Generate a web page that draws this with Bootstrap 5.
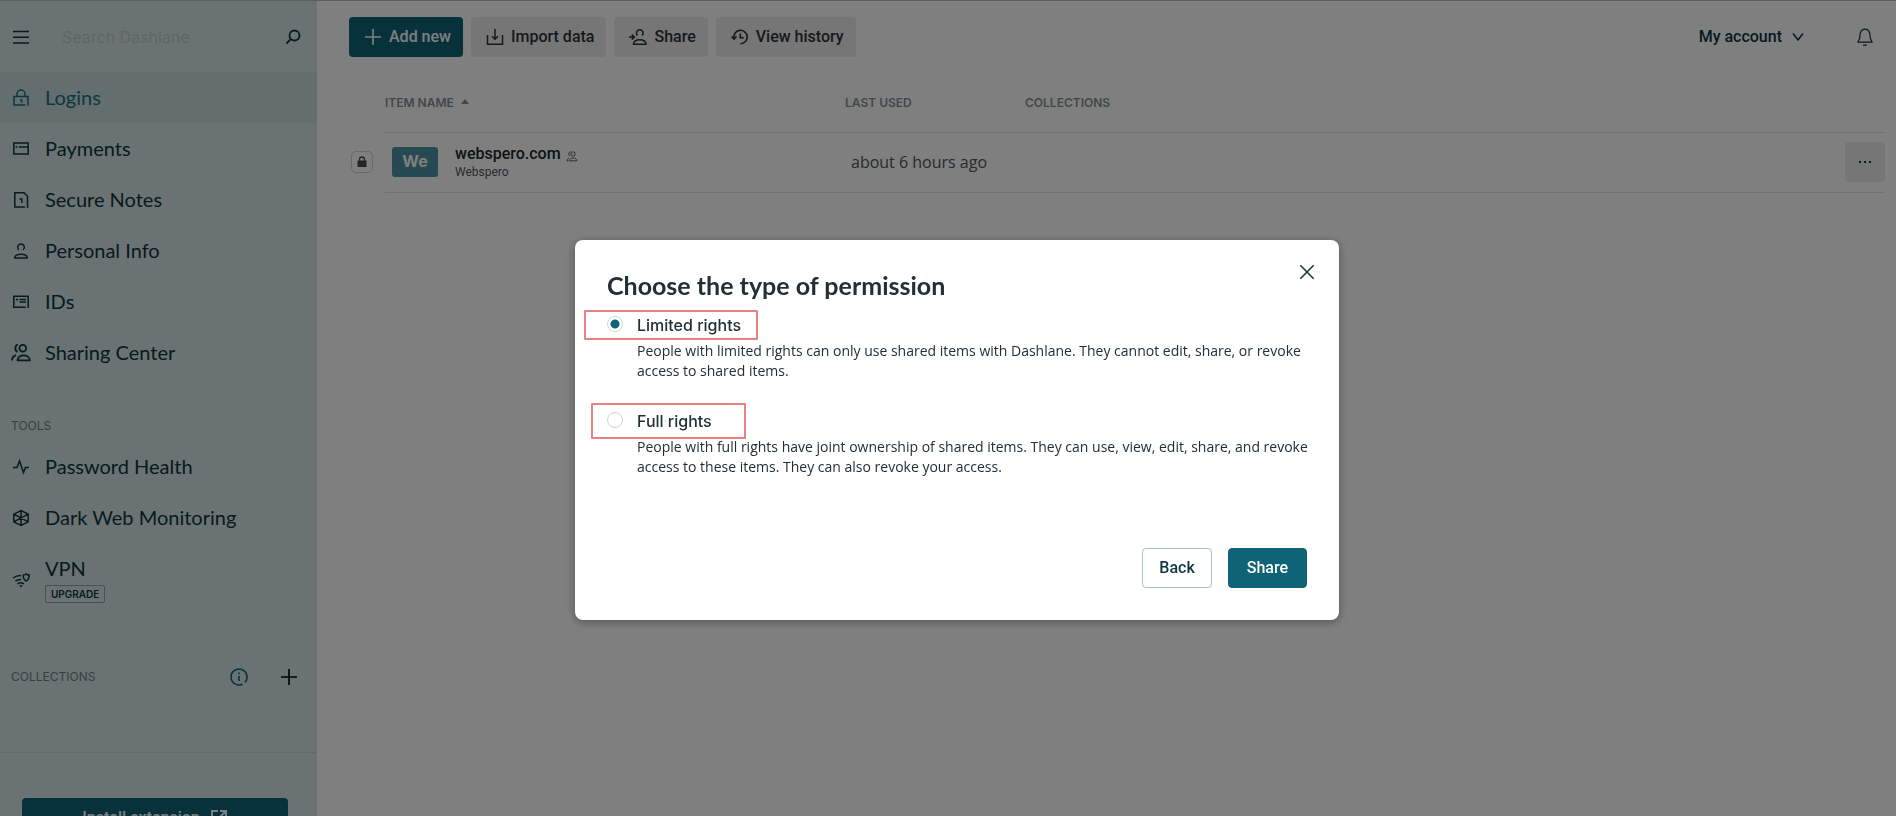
<!DOCTYPE html>
<html lang="en">
<head>
<meta charset="utf-8">
<meta name="viewport" content="width=device-width, initial-scale=1">
<title>Dashlane - Logins</title>
<link href="https://cdn.jsdelivr.net/npm/bootstrap@5.3.0/dist/css/bootstrap.min.css" rel="stylesheet">
<style>
  :root { --ink: #0e353d; --teal: #0e6476; --ui: Roboto, "Liberation Sans", sans-serif; --caps: Inter, "Liberation Sans", sans-serif; --read: "Open Sans", "Liberation Sans", sans-serif; --display: Lato, "Liberation Sans", sans-serif; }
  body { font-family: var(--ui); font-size: 16px; line-height: 24px; color: var(--ink); overflow: hidden; }
  svg { display: block; flex: none; fill: none; stroke: currentColor; }
  .shell { height: 100vh; border-top: 1px solid #bcbcbc; }

  .side { width: 317px; flex: none; background: #d6e5e8; overflow: hidden; }
  .search-row { height: 71px; padding: 0 12px 0 9px; gap: 29px; }
  .search-row input { font-family: var(--caps); font-size: 16px; background: none; border: 0; padding: 0; min-width: 0; outline: 0; }
  .search-row input::placeholder { color: #bfcacd; opacity: 1; }
  .icon-btn { border: 0; background: none; padding: 0; color: inherit; }
  .side-link { padding: 13px 9px; gap: 12px; font: 400 20px/25px var(--display); color: var(--ink); text-decoration: none; }
  .side-link.active { background: #c9dcdf; color: #17707f; }
  .side-head { font: 400 12px/24px var(--caps); color: #6d8085; padding: 0 11px; margin: 0; }
  .tools-head { padding-top: 36px; padding-bottom: 3px; }
  .coll-head { padding-top: 49px; padding-bottom: 63px; padding-right: 16px; gap: 26px; }
  .coll-info { color: var(--teal); }
  .upgrade { font: 600 10px/16px var(--caps); border: 1px solid #8ba3a8; border-radius: 2px; padding: 0 5px; margin-top: 4px; width: fit-content; }
  .side-foot { border-top: 1px solid #c4d3d6; padding: 45px 29px 0 22px; }

  .tool { height: 40px; padding: 0 12px 0 14px; gap: 6px; border: 0; border-radius: 4px; font: 500 16px/24px var(--ui); background: #ececec; color: #2b3336; }
  .tool:hover { background: #e0e0e0; }
  .tool.main, .side-foot .tool { background: var(--teal); color: #fff; }
  .topbar { padding: 16px 19px 0 32px; height: 71px; }
  .account { font: 500 16px/24px var(--ui); gap: 9px; }
  .account-bar { height: 40px; }

  .items { margin: 0 11px 0 31px; }
  .items table { width: 100%; table-layout: fixed; border-collapse: collapse; }
  .items th { height: 60px; padding: 2px 0 0; font: 600 12px/24px var(--caps); color: #7f9195; border-bottom: 1px solid #dfe3e4; }
  .items td { height: 60px; padding: 0; border-bottom: 1px solid #dfe3e4; vertical-align: middle; }
  .items .edge { border: 0; width: 37px; }
  .c-edge { width: 37px; } .c-name { width: 460px; } .c-used { width: 180px; } .c-act { width: 60px; }
  .lock-box { width: 22px; height: 22px; border: 1px solid #d2d2d2; border-radius: 5px; margin-left: 3px; color: #4a4a4a; }
  .thumb { width: 46px; height: 30px; border-radius: 3px; background: #4a95a4; color: #fff; font: 700 16px/28px var(--caps); text-align: center; margin: 0 17px 0 7px; }
  .item-name { font: 500 16px/20px var(--ui); color: #14262c; gap: 5px; }
  .item-name svg { color: #4d5558; margin-top: 4px; }
  .item-sub { font: 400 12px/16px var(--ui); color: #4d5558; }
  .items .when { font: 400 16px/24px var(--read); color: #4d5558; padding-left: 6px; }
  .more { display: block; width: 40px; height: 40px; border: 0; border-radius: 4px; background: #ececec; padding: 0; color: var(--ink); margin-left: auto; }

  .modal-backdrop { --bs-backdrop-opacity: .5; }
  .modal { padding-left: 18px; }
  .modal-dialog { max-width: 764px; margin-top: 240px; }
  .modal-content { border: 0; border-radius: 8px; padding: 29px 32px 32px; box-shadow: 0 2px 10px rgba(0,0,0,.35); color: #212f38; }
  .modal-title { font: 700 25px/32px var(--display); }
  .close-x { position: absolute; top: 20px; right: 20px; color: var(--ink); }
  .choices { padding-top: 12px; margin-right: -12px; }
  .rights { padding-left: 30px; position: relative; }
  .rights + .rights { margin-top: 28px; }
  .rights input { appearance: none; float: left; width: 16px; height: 16px; border: 1px solid #ccd5d8; border-radius: 50%; margin: 3px 0 0 -30px; }
  .rights input:checked { background: radial-gradient(circle, var(--teal) 4px, transparent 5px); }
  .rights label { font: 500 16px/24px var(--caps); display: block; }
  .rights p { font: 400 14px/20px var(--read); margin: 4px 0 0; }
  .callout { position: absolute; border: 2px solid #ea8080; border-radius: 1px; pointer-events: none; }
  .callout.wide { left: -23px; top: -3px; width: 174px; height: 30px; }
  .callout.tall { left: -16px; top: -6px; width: 155px; height: 36px; }
  .act { height: 40px; border-radius: 4px; font: 500 16px/24px var(--ui); padding: 0 16px; border: 1px solid #a3c3c7; background: #fff; color: var(--ink); }
  .act.go { background: var(--teal); border-color: var(--teal); color: #fff; padding: 0 18px; }
  .actions { margin-top: 71px; gap: 16px; }
</style>
</head>
<body>
<div class="shell d-flex">
  <aside class="side">
    <div class="search-row d-flex align-items-center">
      <button class="icon-btn" type="button" aria-label="Menu"><svg width="24" height="24" viewBox="0 0 24 24" stroke-width="1.600"><path d="M4 6.500h16M4 12.200h16M4 18h16"/></svg></button>
      <input class="flex-grow-1" type="search" placeholder="Search Dashlane" aria-label="Search Dashlane">
      <button class="icon-btn" type="button" aria-label="Search"><svg width="24" height="24" viewBox="0 0 24 24" stroke-width="1.800"><circle cx="13.500" cy="10.500" r="5"/><path d="m9.800 14.200-4.300 4.300"/></svg></button>
    </div>
    <nav aria-label="Vault">
      <a class="side-link active d-flex align-items-center" href="#logins"><svg width="24" height="24" viewBox="0 0 24 24" stroke-width="1.500"><path d="M19 19.500V10.500H5v8.500h11.500M8 10.500V8a4 4 0 0 1 8 0v2.500M11 13.800h1.600v3"/></svg>Logins</a>
      <a class="side-link d-flex align-items-center" href="#payments"><svg width="24" height="24" viewBox="0 0 24 24" stroke-width="1.500"><path d="M4.800 6h14.400v11H4.800zM6.500 10h2M10 10h9"/></svg>Payments</a>
      <a class="side-link d-flex align-items-center" href="#notes"><svg width="24" height="24" viewBox="0 0 24 24" stroke-width="1.500"><path d="M16 19H5.800V4.800H15l3.500 3.500V20M10.500 11h2.300v4"/></svg>Secure Notes</a>
      <a class="side-link d-flex align-items-center" href="#personal"><svg width="24" height="24" viewBox="0 0 24 24" stroke-width="1.500"><path d="M10 10.800a3.300 3.300 0 1 1 4 0M5.800 19h12.400c0-5-12.400-5-12.400 0z"/></svg>Personal Info</a>
      <a class="side-link d-flex align-items-center" href="#ids"><svg width="24" height="24" viewBox="0 0 24 24" stroke-width="1.500"><path d="M19.200 18V6.300H4.800v10.900h12M7 9.500h2M10.500 9.500h6.500M10.500 12h6.500M7.500 9.500v1"/></svg>IDs</a>
      <a class="side-link d-flex align-items-center" href="#sharing"><svg width="24" height="24" viewBox="0 0 24 24" stroke-width="1.800"><circle cx="13.800" cy="7.200" r="3.400"/><path d="M9 3.500C5.500 4.500 5.500 9.500 8.500 11M8.500 19.300h12.300c0-6.500-12.300-6.500-12.300 0zM7 14.200c-2.600.8-4 2.400-4 5.300"/></svg>Sharing Center</a>
      <h2 class="side-head tools-head">TOOLS</h2>
      <a class="side-link d-flex align-items-center" href="#health"><svg width="24" height="24" viewBox="0 0 24 24" stroke-width="1.500"><path d="M4 12.500h4l2.500-6.500 4 11.500 2-5H20"/></svg>Password Health</a>
      <a class="side-link d-flex align-items-center" href="#darkweb"><svg width="24" height="24" viewBox="0 0 24 24" stroke-width="1.500"><path d="m12 4.500 7.200 3.700v7.600L12 19.500l-7.200-3.700V8.200zM12 4.500v15M4.800 8.200l14.400 7.600M19.200 8.200 4.800 15.800"/></svg>Dark Web Monitoring</a>
      <a class="side-link d-flex align-items-center" href="#vpn"><svg width="24" height="24" viewBox="0 0 24 24" stroke-width="1.500"><path d="M4 10c2.500-1.800 5-2.700 8-2.500M6.300 13.200c2-1.500 3.800-2 6-1.700M8.500 15.800c2-1.200 4.500-1.200 6.500 0M14.200 7c2 0 2.800-.5 3-1 .6.600 1.500 1 3 1 0 3-.5 5-3 6-2.500-1-3-3-3-6z"/><path fill="currentColor" stroke="none" d="M10 17.300h4L12 19.500z"/></svg><span>VPN<span class="upgrade d-block">UPGRADE</span></span></a>
    </nav>
    <div class="coll-head side-head d-flex align-items-center">
      <span class="me-auto">COLLECTIONS</span>
      <button class="icon-btn coll-info" type="button" aria-label="About collections"><svg width="24" height="24" viewBox="0 0 24 24" stroke-width="1.600"><path d="M18 17.300a8 8 0 1 0-2.500 1.900M12 11v5M12 7.500v1.800"/></svg></button>
      <button class="icon-btn text-black" type="button" aria-label="Add a collection"><svg width="24" height="24" viewBox="0 0 24 24" stroke-width="1.600"><path d="M12 4v16M4 12h16"/></svg></button>
    </div>
    <div class="side-foot">
      <button class="tool w-100 d-flex align-items-center justify-content-center" type="button">Install extension <svg width="24" height="20" viewBox="0 0 24 20" stroke-width="2"><path d="M12 3H6v14h13v-6M14 3h6v6M20 3l-8 8"/></svg></button>
    </div>
  </aside>

  <main class="flex-grow-1">
    <header class="topbar d-flex align-items-start justify-content-between">
      <div class="d-flex gap-2">
        <button class="tool main d-flex align-items-center" type="button"><svg width="20" height="20" viewBox="0 0 20 20" stroke-width="1.600"><path d="M10 2v16M2 10h16"/></svg>Add new</button>
        <button class="tool d-flex align-items-center" type="button"><svg width="20" height="20" viewBox="0 0 20 20" stroke-width="1.500"><path d="M2.500 8v9.200h15V8M10 2v10M7 9.200l3 3 3-3"/></svg>Import data</button>
        <button class="tool d-flex align-items-center" type="button"><svg width="20" height="20" viewBox="0 0 20 20" stroke-width="1.600"><path d="M9.500 8.500a3.300 3.300 0 1 1 4.500 0M5.500 17.200h12.500c-.5-6-12-6-12.500 0zM1 10h5M3.800 7.500 6.300 10l-2.500 2.500"/></svg>Share</button>
        <button class="tool d-flex align-items-center" type="button"><svg width="20" height="20" viewBox="0 0 20 20" stroke-width="1.600"><path d="M4 11.500a6.700 6.700 0 1 1 6.500 5.200M1.500 9.500 4 12l2.500-2.500M10.300 6.500v4.300h3.500"/></svg>View history</button>
      </div>
      <div class="account-bar d-flex align-items-center gap-5">
        <button class="account icon-btn d-flex align-items-center" type="button">My account<svg width="14" height="14" viewBox="0 0 14 14" stroke-width="1.600"><path d="m2 3.500 5 6.500 5-6.500"/></svg></button>
        <button class="icon-btn" type="button" aria-label="Notifications"><svg width="24" height="24" viewBox="0 0 24 24" stroke-width="1.300"><path d="M5 17.200h14c0-2-1.800-2.500-1.800-5 0-4.500-1-8-5.200-8s-5.200 3.500-5.200 8c0 2.500-1.800 3-1.800 5zM10 20.200h4"/></svg></button>
      </div>
    </header>
    <section class="items">
      <table>
        <colgroup><col class="c-edge"><col class="c-name"><col class="c-used"><col><col class="c-act"></colgroup>
        <thead><tr>
          <td class="edge"></td>
          <th scope="col">ITEM NAME <svg class="d-inline-block ms-1" width="8" height="8" viewBox="0 0 8 8"><path fill="currentColor" stroke="none" d="M0 5 4 0l4 5z"/></svg></th>
          <th scope="col">LAST USED</th>
          <th scope="col">COLLECTIONS</th>
          <th scope="col" aria-label="Actions"></th>
        </tr></thead>
        <tbody><tr>
          <td class="edge"><div class="lock-box d-flex align-items-center justify-content-center"><svg width="10" height="12" viewBox="0 0 10 12" stroke-width="1.300"><path fill="currentColor" stroke="none" d="M.500 4.500h9V11h-9z"/><path d="M2.500 5V3.500a2.500 2.500 0 0 1 5 0V5"/></svg></div></td>
          <td><div class="d-flex align-items-center">
            <div class="thumb">We</div>
            <div>
              <div class="item-name d-flex align-items-center">webspero.com<svg width="12" height="12" viewBox="0 0 12 12" stroke-width=".900"><circle cx="7" cy="4" r="2.200"/><path d="M4.500 1.500a2.500 2.500 0 0 0-.5 4.500M3.500 10.800H11c0-3.800-7.500-3.800-7.500 0zM3 8c-1.200.5-2 1.300-2 3h1.500"/></svg></div>
              <div class="item-sub">Webspero</div>
            </div>
          </div></td>
          <td class="when">about 6 hours ago</td>
          <td></td>
          <td><button class="more" type="button" aria-label="More actions"><svg class="mx-auto" width="14" height="4" viewBox="0 0 14 4"><path fill="currentColor" stroke="none" d="M1 1h2v2H1zM6 1h2v2H6zM11 1h2v2h-2z"/></svg></button></td>
        </tr></tbody>
      </table>
    </section>
  </main>
</div>

<div class="modal-backdrop show"></div>
<div class="modal d-block" tabindex="-1" role="dialog" aria-modal="true" aria-labelledby="dlg-title">
  <div class="modal-dialog">
    <form class="modal-content">
      <h1 class="modal-title" id="dlg-title">Choose the type of permission</h1>
      <button class="icon-btn close-x" type="button" aria-label="Close"><svg width="24" height="24" viewBox="0 0 24 24" stroke-width="1.500"><path d="m5.300 5.300 13.400 13.400M18.700 5.300 5.300 18.700"/></svg></button>
      <div class="choices">
        <div class="rights">
          <input type="radio" name="rights" id="limited" checked>
          <label for="limited">Limited rights</label>
          <p>People with limited rights can only use shared items with Dashlane. They cannot edit, share, or revoke access to shared items.</p>
          <span class="callout wide"></span>
        </div>
        <div class="rights">
          <input type="radio" name="rights" id="full">
          <label for="full">Full rights</label>
          <p>People with full rights have joint ownership of shared items. They can use, view, edit, share, and revoke access to these items. They can also revoke your access.</p>
          <span class="callout tall"></span>
        </div>
      </div>
      <div class="actions d-flex justify-content-end">
        <button class="act" type="button">Back</button>
        <button class="act go" type="submit">Share</button>
      </div>
    </form>
  </div>
</div>
<script src="https://cdn.jsdelivr.net/npm/bootstrap@5.3.0/dist/js/bootstrap.bundle.min.js"></script>
</body>
</html>
